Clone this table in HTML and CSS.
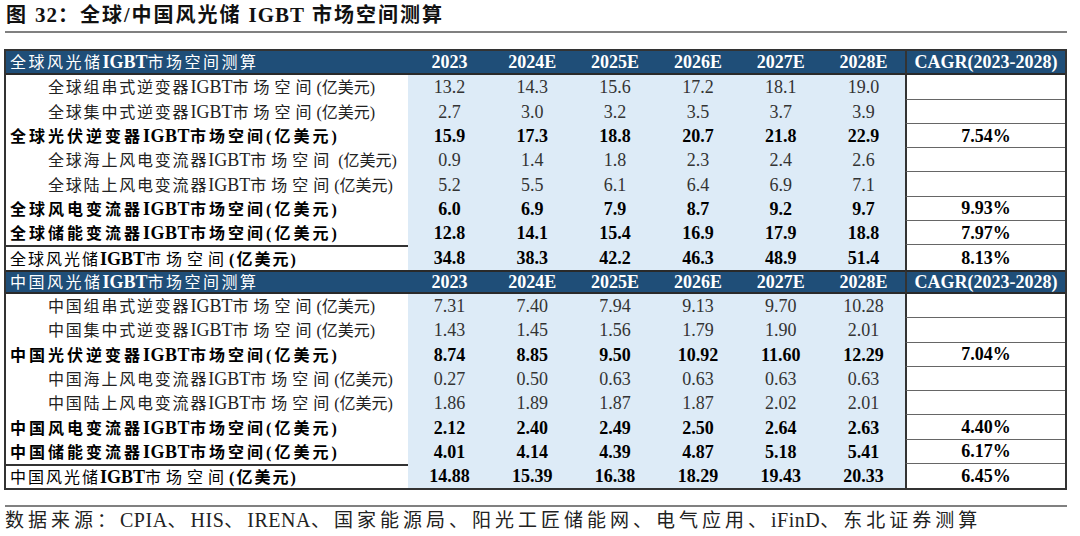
FILE: index.html
```html
<!DOCTYPE html>
<html lang="zh-CN">
<head>
<meta charset="utf-8">
<title>全球/中国风光储 IGBT 市场空间测算</title>
<link rel="stylesheet" href="styles.css">
</head>
<body>
<div class="page">
  <h1 class="title">图 <span class="en">32</span>：全球/中国风光储 <span class="en">IGBT</span> 市场空间测算</h1>
  <table class="tbl">
    <colgroup>
      <col class="c-lab"><col class="c-num"><col class="c-num"><col class="c-num"><col class="c-num"><col class="c-num"><col class="c-num"><col class="c-cagr">
    </colgroup>
    <tbody>
      <tr class="hd">
        <td class="lab">全球风光储<span class="en">IGBT</span>市场空间测算</td>
        <td class="num">2023</td><td class="num">2024E</td><td class="num">2025E</td><td class="num">2026E</td><td class="num">2027E</td><td class="num">2028E</td>
        <td class="cagr">CAGR(2023-2028)</td>
      </tr>
      <tr class="r">
        <td class="lab">全球组串式逆变器<span class="en">IGBT</span><span class="w">市场空间</span><span class="t">(亿美元)</span></td>
        <td class="num">13.2</td><td class="num">14.3</td><td class="num">15.6</td><td class="num">17.2</td><td class="num">18.1</td><td class="num">19.0</td>
        <td class="cagr"></td>
      </tr>
      <tr class="r">
        <td class="lab">全球集中式逆变器<span class="en">IGBT</span><span class="w">市场空间</span><span class="t">(亿美元)</span></td>
        <td class="num">2.7</td><td class="num">3.0</td><td class="num">3.2</td><td class="num">3.5</td><td class="num">3.7</td><td class="num">3.9</td>
        <td class="cagr"></td>
      </tr>
      <tr class="b">
        <td class="lab">全球光伏逆变器<span class="en">IGBT</span>市场空间(亿美元)</td>
        <td class="num">15.9</td><td class="num">17.3</td><td class="num">18.8</td><td class="num">20.7</td><td class="num">21.8</td><td class="num">22.9</td>
        <td class="cagr">7.54%</td>
      </tr>
      <tr class="r">
        <td class="lab">全球海上风电变流器<span class="en">IGBT</span><span class="w">市场空间</span><span class="t"> (亿美元)</span></td>
        <td class="num">0.9</td><td class="num">1.4</td><td class="num">1.8</td><td class="num">2.3</td><td class="num">2.4</td><td class="num">2.6</td>
        <td class="cagr"></td>
      </tr>
      <tr class="r">
        <td class="lab">全球陆上风电变流器<span class="en">IGBT</span><span class="w">市场空间</span><span class="t">(亿美元)</span></td>
        <td class="num">5.2</td><td class="num">5.5</td><td class="num">6.1</td><td class="num">6.4</td><td class="num">6.9</td><td class="num">7.1</td>
        <td class="cagr"></td>
      </tr>
      <tr class="b">
        <td class="lab">全球风电变流器<span class="en">IGBT</span>市场空间(亿美元)</td>
        <td class="num">6.0</td><td class="num">6.9</td><td class="num">7.9</td><td class="num">8.7</td><td class="num">9.2</td><td class="num">9.7</td>
        <td class="cagr">9.93%</td>
      </tr>
      <tr class="b">
        <td class="lab">全球储能变流器<span class="en">IGBT</span>市场空间(亿美元)</td>
        <td class="num">12.8</td><td class="num">14.1</td><td class="num">15.4</td><td class="num">16.9</td><td class="num">17.9</td><td class="num">18.8</td>
        <td class="cagr">7.97%</td>
      </tr>
      <tr class="tot">
        <td class="lab">全球风光储<span class="en">IGBT</span><span class="w">市场空间</span><span class="t">(亿美元)</span></td>
        <td class="num">34.8</td><td class="num">38.3</td><td class="num">42.2</td><td class="num">46.3</td><td class="num">48.9</td><td class="num">51.4</td>
        <td class="cagr">8.13%</td>
      </tr>
      <tr class="hd hd2">
        <td class="lab">中国风光储<span class="en">IGBT</span>市场空间测算</td>
        <td class="num">2023</td><td class="num">2024E</td><td class="num">2025E</td><td class="num">2026E</td><td class="num">2027E</td><td class="num">2028E</td>
        <td class="cagr">CAGR(2023-2028)</td>
      </tr>
      <tr class="r">
        <td class="lab">中国组串式逆变器<span class="en">IGBT</span><span class="w">市场空间</span><span class="t">(亿美元)</span></td>
        <td class="num">7.31</td><td class="num">7.40</td><td class="num">7.94</td><td class="num">9.13</td><td class="num">9.70</td><td class="num">10.28</td>
        <td class="cagr"></td>
      </tr>
      <tr class="r">
        <td class="lab">中国集中式逆变器<span class="en">IGBT</span><span class="w">市场空间</span><span class="t">(亿美元)</span></td>
        <td class="num">1.43</td><td class="num">1.45</td><td class="num">1.56</td><td class="num">1.79</td><td class="num">1.90</td><td class="num">2.01</td>
        <td class="cagr"></td>
      </tr>
      <tr class="b">
        <td class="lab">中国光伏逆变器<span class="en">IGBT</span>市场空间(亿美元)</td>
        <td class="num">8.74</td><td class="num">8.85</td><td class="num">9.50</td><td class="num">10.92</td><td class="num">11.60</td><td class="num">12.29</td>
        <td class="cagr">7.04%</td>
      </tr>
      <tr class="r">
        <td class="lab">中国海上风电变流器<span class="en">IGBT</span><span class="w">市场空间</span><span class="t">(亿美元)</span></td>
        <td class="num">0.27</td><td class="num">0.50</td><td class="num">0.63</td><td class="num">0.63</td><td class="num">0.63</td><td class="num">0.63</td>
        <td class="cagr"></td>
      </tr>
      <tr class="r">
        <td class="lab">中国陆上风电变流器<span class="en">IGBT</span><span class="w">市场空间</span><span class="t">(亿美元)</span></td>
        <td class="num">1.86</td><td class="num">1.89</td><td class="num">1.87</td><td class="num">1.87</td><td class="num">2.02</td><td class="num">2.01</td>
        <td class="cagr"></td>
      </tr>
      <tr class="b">
        <td class="lab">中国风电变流器<span class="en">IGBT</span>市场空间(亿美元)</td>
        <td class="num">2.12</td><td class="num">2.40</td><td class="num">2.49</td><td class="num">2.50</td><td class="num">2.64</td><td class="num">2.63</td>
        <td class="cagr">4.40%</td>
      </tr>
      <tr class="b">
        <td class="lab">中国储能变流器<span class="en">IGBT</span>市场空间(亿美元)</td>
        <td class="num">4.01</td><td class="num">4.14</td><td class="num">4.39</td><td class="num">4.87</td><td class="num">5.18</td><td class="num">5.41</td>
        <td class="cagr">6.17%</td>
      </tr>
      <tr class="tot last">
        <td class="lab">中国风光储<span class="en">IGBT</span><span class="w">市场空间</span><span class="t">(亿美元)</span></td>
        <td class="num">14.88</td><td class="num">15.39</td><td class="num">16.38</td><td class="num">18.29</td><td class="num">19.43</td><td class="num">20.33</td>
        <td class="cagr">6.45%</td>
      </tr>
    </tbody>
  </table>
  <p class="source">数据来源：<span class="en">CPIA</span>、<span class="en">HIS</span>、<span class="en">IRENA</span>、国家能源局、阳光工匠储能网、电气应用、<span class="en">iFinD</span>、东北证券测算</p>
</div>
</body>
</html>
```

FILE: styles.css
```css
html, body {
  margin: 0;
  padding: 0;
  background: #ffffff;
  overflow: hidden;
}

.page {
  width: 1063px;
  margin-left: 4px;
  font-family: "Liberation Serif", "Noto Sans CJK SC", serif;
}

/* ---------- title ---------- */
.title {
  margin: 0 0 0 1px;
  padding-left: 1px;
  height: 31px;
  line-height: 31px;
  border-bottom: 2px solid #808080;
  font-family: "Liberation Serif", "Noto Sans CJK SC", serif;
  font-size: 20px;
  font-weight: 700;
  letter-spacing: 2px;
  color: #111111;
  white-space: nowrap;
}

.title .en {
  font-size: 21px;
  letter-spacing: 1px;
}

/* ---------- table ---------- */
.tbl {
  margin-top: 16px;
  width: 1063px;
  table-layout: fixed;
  border-collapse: separate;
  border-spacing: 0;
  border: 2px solid #333333;
}

.c-lab { width: 402px; }
.c-num { width: 82.83px; }
.c-cagr { width: 160px; }

.tbl td {
  padding: 0;
  height: 24.3px;
  box-sizing: border-box;
  vertical-align: middle;
  line-height: 1;
  white-space: nowrap;
  overflow: hidden;
}

.lab {
  text-align: left;
  font-size: 16px;
  color: #222222;
}

.lab .en {
  font-size: 18px;
  letter-spacing: 0;
}

.num {
  background: #ddebf7;
  text-align: center;
  font-size: 18px;
  color: #333333;
}

.cagr {
  background: #ffffff;
  text-align: center;
  font-size: 18px;
  color: #111111;
  border-left: 2px solid #333333;
  border-bottom: 1.5px solid #666666;
}

/* regular (indented) rows */
.r .lab {
  padding-left: 42px;
  letter-spacing: 1.8px;
}
.r .lab .w { letter-spacing: 5px; }
.r .lab .t { letter-spacing: 0; }

/* bold subtotal rows */
.b td {
  font-weight: 700;
  color: #000000;
}
.b .lab {
  padding-left: 4px;
  letter-spacing: 3px;
}
.b .lab .en { letter-spacing: 0.5px; }

/* total rows */
.tot td {
  font-weight: 700;
  color: #000000;
}
.tot .lab {
  padding-left: 4px;
  font-weight: 400;
  letter-spacing: 2px;
  border-top: 2px solid #333333;
}
.tot .lab .en { font-weight: 700; }
.tot .lab .w { letter-spacing: 5px; }
.tot .lab .t { letter-spacing: 2px; font-weight: 700; }
.tot .cagr { border-bottom: none; }

/* header rows */
.hd td {
  background: #1f4e78;
  color: #ffffff;
  font-weight: 700;
  border-bottom: 2px solid #2a2a2a;
}
.hd .lab {
  padding-left: 4px;
  font-weight: 400;
  letter-spacing: 2.5px;
}
.hd .lab .en { font-weight: 700; }
.hd2 td { border-top: 2px solid #2a2a2a; }

/* ---------- source ---------- */
.source {
  margin: 15px 0 0 1px;
  padding-left: 0;
  border-top: 2px solid #808080;
  height: 26px;
  line-height: 26px;
  font-family: "Liberation Serif", "Noto Sans CJK SC", serif;
  font-size: 19px;
  letter-spacing: 4px;
  color: #222222;
  white-space: nowrap;
}

.source .en {
  font-size: 20px;
  letter-spacing: 0.5px;
}
```
